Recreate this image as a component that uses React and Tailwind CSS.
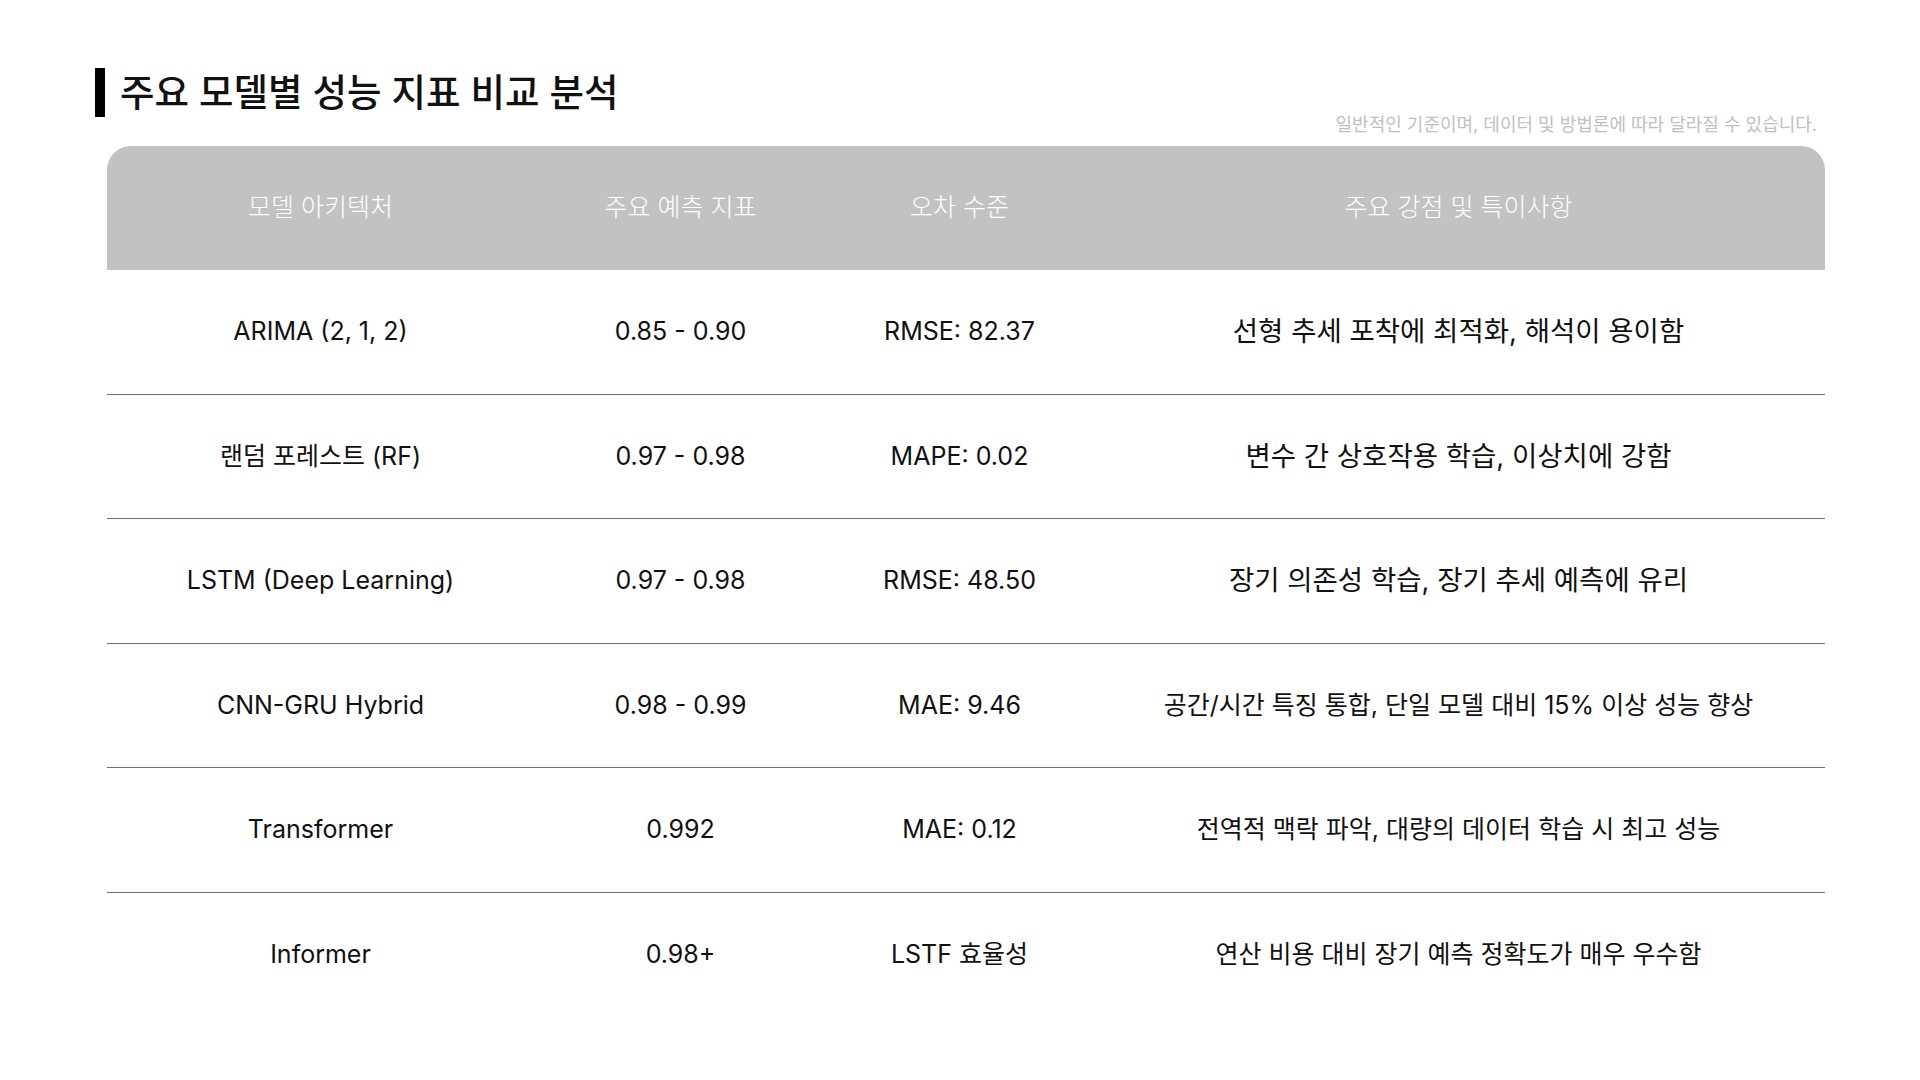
// Model performance comparison slide
const rows = [
  { model: 'ARIMA (2, 1, 2)', metric: '0.85 - 0.90', error: 'RMSE: 82.37', note: '선형 추세 포착에 최적화, 해석이 용이함' },
  { model: '랜덤 포레스트 (RF)', metric: '0.97 - 0.98', error: 'MAPE: 0.02', note: '변수 간 상호작용 학습, 이상치에 강함' },
  { model: 'LSTM (Deep Learning)', metric: '0.97 - 0.98', error: 'RMSE: 48.50', note: '장기 의존성 학습, 장기 추세 예측에 유리' },
  { model: 'CNN-GRU Hybrid', metric: '0.98 - 0.99', error: 'MAE: 9.46', note: '공간/시간 특징 통합, 단일 모델 대비 15% 이상 성능 향상' },
  { model: 'Transformer', metric: '0.992', error: 'MAE: 0.12', note: '전역적 맥락 파악, 대량의 데이터 학습 시 최고 성능' },
  { model: 'Informer', metric: '0.98+', error: 'LSTF 효율성', note: '연산 비용 대비 장기 예측 정확도가 매우 우수함' },
]

const headers = ['모델 아키텍처', '주요 예측 지표', '오차 수준', '주요 강점 및 특이사항']

function App() {
  return (
    <div className="min-h-screen w-full bg-white font-[Inter,'Noto_Sans_CJK_KR',sans-serif] text-[#111]">
      <div className="px-[95px] pt-[68px]">
        {/* title */}
        <div className="flex items-center h-[49px] gap-[15px]">
          <div className="w-[10px] h-[49px] bg-black" />
          <h1 className="text-[37.5px] font-medium leading-none text-[#111]">주요 모델별 성능 지표 비교 분석</h1>
        </div>
        <p className="-mt-[4px] pr-[8px] text-right text-[18px] leading-[24px] text-[#c0c0c0]">
          일반적인 기준이며, 데이터 및 방법론에 따라 달라질 수 있습니다.
        </p>

        {/* table */}
        <div className="mt-[9px] ml-[12px]">
          <div className="grid grid-cols-[427px_293px_265px_1fr] h-[124px] bg-[#c2c2c2] rounded-t-[24px]">
            {headers.map(h => (
              <div key={h} className="flex items-center justify-center text-[25px] font-light text-white">
                {h}
              </div>
            ))}
          </div>
          {rows.map((r, i) => (
            <div
              key={r.model}
              className={
                i < rows.length - 1
                  ? 'grid grid-cols-[427px_293px_265px_1fr] h-[124.5px] border-b-[1.5px] border-[#6e6e6e] text-[25px]'
                  : 'grid grid-cols-[427px_293px_265px_1fr] h-[124.5px] text-[25px]'
              }
            >
              <div className="flex items-center justify-center">{r.model}</div>
              <div className="flex items-center justify-center">{r.metric}</div>
              <div className="flex items-center justify-center">{r.error}</div>
              <div className={i < 3 ? 'flex items-center justify-center text-[27.5px]' : 'flex items-center justify-center'}>
                {r.note}
              </div>
            </div>
          ))}
        </div>
      </div>
    </div>
  )
}

export default App
